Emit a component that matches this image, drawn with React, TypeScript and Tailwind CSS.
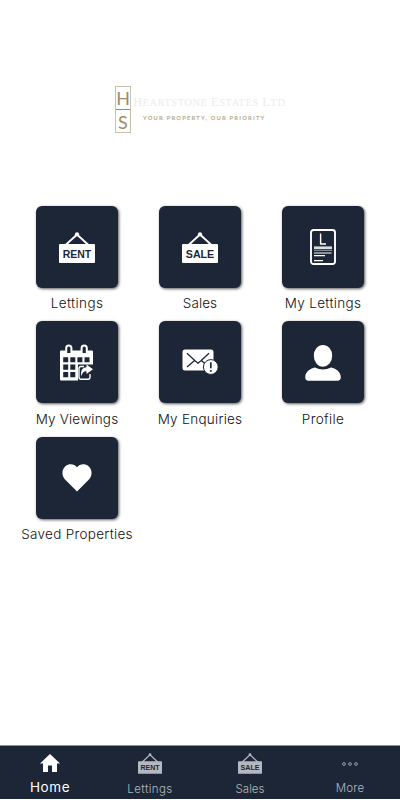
import React from 'react';

interface SignIconProps {
  text: string;
  className: string;
}

const SignIcon: React.FC<SignIconProps> = ({ text, className }) => (
  <svg viewBox="0 0 36 31" className={className}>
    <path d="M6 13.5 18 2.5 30 13.5" fill="none" stroke="currentColor" strokeWidth="1.9" />
    <circle cx="18" cy="2.3" r="2.1" fill="currentColor" />
    <rect x="0" y="12" width="36" height="19" rx="1" fill="currentColor" />
    <text
      x="18"
      y="25.6"
      textAnchor="middle"
      textLength="28.5"
      lengthAdjust="spacingAndGlyphs"
      fontSize="11.5"
      fontWeight="700"
      fill="#1c2637"
      fontFamily="'Liberation Sans', sans-serif"
    >
      {text}
    </text>
  </svg>
);

const DocumentIcon = () => (
  <svg viewBox="0 0 26 36" className="h-[36px] w-[26px]">
    <rect x="1" y="1" width="24" height="34" rx="2.5" fill="none" stroke="#fff" strokeWidth="1.9" />
    <path d="M10.6 4.5V15H16" fill="none" stroke="#fff" strokeWidth="1.4" />
    <path d="M4 18.7H22" stroke="#d9dce1" strokeWidth="2.6" />
    <path d="M4 21.3H22" stroke="#8e949e" strokeWidth="1.2" />
    <path d="M4 24H21.5M4 26.6H15M4 31.6H13" stroke="#fff" strokeWidth="1.2" />
  </svg>
);

const CalendarIcon = () => (
  <svg viewBox="0 0 36 37" className="h-[37px] w-[36px]">
    <path d="M2 6.5H33Q34 6.5 34 7.5V21H19V36.5H2Q1 36.5 1 35.5V7.5Q1 6.5 2 6.5Z" fill="#fff" />
    <path
      d="M7.2 9V4A2.6 2.6 0 0 1 12.4 4V9M22.6 9V4A2.6 2.6 0 0 1 27.8 4V9"
      fill="#1c2637"
      stroke="#fff"
      strokeWidth="2"
    />
    <path
      d="M4.2 13.3h5v4.9h-5zM11.3 13.3h5v4.9h-5zM18.4 13.3h5v4.9h-5zM25.5 13.3h5v4.9h-5zM4.2 20.5h5v5.2h-5zM11.3 20.5h5v5.2h-5zM4.2 28h5v5.2h-5zM11.3 28h5v5.2h-5z"
      fill="#1c2637"
    />
    <path d="M19 20.5H34V37H19Z" fill="#1c2637" />
    <path
      d="M25 22.5H22Q20 22.5 20 24.5V33Q20 35.2 22 35.2H29Q31 35.2 31 33V30"
      fill="none"
      stroke="#fff"
      strokeWidth="1.4"
    />
    <path d="M27.5 20.6 34 25.3 27.5 30V27.2C24.5 27.2 23.2 28.7 22.5 32.5C21.2 27 23.3 23.3 27.5 23.2Z" fill="#fff" />
  </svg>
);

const MailIcon = () => (
  <svg viewBox="0 0 37 26" className="h-[26px] w-[37px]">
    <rect x="0.5" y="0.5" width="31" height="21" rx="2.5" fill="#fff" />
    <path
      d="M5 4.2 13.3 12Q14.5 13 16 14.3Q17.5 13 18.7 12L27 4.2M12.6 11.5 5 18M19.4 11.5 24 15.5"
      fill="none"
      stroke="#1c2637"
      strokeWidth="1.3"
    />
    <circle cx="28.8" cy="18" r="7.4" fill="#fff" stroke="#1c2637" strokeWidth="1" />
    <path d="M28.8 13.3V19.3" stroke="#1c2637" strokeWidth="1.7" />
    <circle cx="28.8" cy="21.9" r="1" fill="#1c2637" />
  </svg>
);

const ProfileIcon = () => (
  <svg viewBox="0 0 36 37" className="h-[37px] w-[36px]">
    <ellipse cx="18" cy="11.8" rx="9.2" ry="10.9" fill="#fff" />
    <path
      d="M10 23.5Q18 27.5 26 23.5C31.5 24.8 35.5 28 35.8 33Q35.8 36.8 32.5 36.8H3.5Q.2 36.8 .2 33C.5 28 4.5 24.8 10 23.5Z"
      fill="#fff"
    />
  </svg>
);

const HeartIcon = () => (
  <svg viewBox="0 0 30 28" className="mt-[1px] h-[28px] w-[30px]">
    <path
      d="M15 27.5 2.8 15.2C-.7 11.3-.1 5.2 3.4 2.2C7-.8 12.3-.3 15 3.3C17.7-.3 23-.8 26.6 2.2C30.1 5.2 30.7 11.3 27.2 15.2Z"
      fill="#fff"
    />
  </svg>
);

const HomeIcon = () => (
  <svg viewBox="0 0 20 18" className="h-[18px] w-[20px]">
    <path d="M10 0 20 9.5H17V18H12V11.5H8V18H3V9.5H0Z" fill="#fff" />
  </svg>
);

const MoreIcon = () => (
  <svg viewBox="0 0 16 4" className="h-[4px] w-[16px]" fill="none" stroke="#b4b8bf" strokeWidth="0.8">
    <circle cx="2" cy="2" r="1.4" />
    <circle cx="8" cy="2" r="1.4" />
    <circle cx="14" cy="2" r="1.4" />
  </svg>
);

const tiles = [
  { label: 'Lettings', spacing: 'tracking-[0.4px]', icon: <SignIcon text="RENT" className="mt-[1px] h-[31px] w-[36px]" /> },
  { label: 'Sales', spacing: 'tracking-[0.1px]', icon: <SignIcon text="SALE" className="mt-[1px] h-[31px] w-[36px]" /> },
  { label: 'My Lettings', spacing: 'tracking-[0.35px]', icon: <DocumentIcon /> },
  { label: 'My Viewings', spacing: 'tracking-[0.2px]', icon: <CalendarIcon /> },
  { label: 'My Enquiries', spacing: 'tracking-[0.25px]', icon: <MailIcon /> },
  { label: 'Profile', spacing: 'tracking-[0.35px]', icon: <ProfileIcon /> },
  { label: 'Saved Properties', spacing: 'tracking-[0.3px]', icon: <HeartIcon /> },
];

const Logo = () => (
  <div className="flex h-[47px] w-[170px] gap-[2px]">
    <div className="flex h-[47px] w-[16px] shrink-0 flex-col border border-[#c9bfae] text-center font-['Lato',sans-serif] text-[18px] leading-[22px] text-[#a08a64]">
      <div className="h-[23px] border-b border-[#a08a64]">H</div>
      <div className="h-[22px] leading-[24px]">S</div>
    </div>
    <div className="flex flex-col whitespace-nowrap">
      <div className="mt-[8px] h-[16px] font-['Liberation_Serif',serif] text-[12.5px] leading-[16px] tracking-[0.5px] text-[#ececec]">
        H<span className="text-[10.5px]">EARTSTONE</span> E<span className="text-[10.5px]">STATES</span> L
        <span className="text-[10.5px]">TD</span>
      </div>
      <div className="ml-[10px] mt-[3px] font-['Lato',sans-serif] text-[5.8px] font-bold leading-[9px] tracking-[1.2px] text-[#b5a78c]">
        YOUR PROPERTY, OUR PRIORITY
      </div>
    </div>
  </div>
);

const App: React.FC = () => {
  return (
    <div className="flex h-[800px] w-[400px] flex-col overflow-hidden bg-white font-['Inter',sans-serif]">
      <header className="flex h-[206px] shrink-0 justify-center pt-[86px]">
        <Logo />
      </header>

      <main className="grid grid-cols-[123px_123px_123px] auto-rows-[115.4px] justify-center">
        {tiles.map((tile) => (
          <div key={tile.label} className="flex flex-col items-center">
            <div className="flex size-[82px] items-center justify-center rounded-[6px] bg-[#1c2637] text-white shadow-[1px_1px_3px_rgba(0,0,0,0.65)]">
              {tile.icon}
            </div>
            <div className={`mt-[5.3px] whitespace-nowrap text-[13.5px] font-light leading-[20px] text-[#111] ${tile.spacing}`}>
              {tile.label}
            </div>
          </div>
        ))}
      </main>

      <nav className="mt-auto mb-[1px] grid h-[54px] shrink-0 grid-cols-4 border-t border-[#8d929b] bg-[#1c2637] text-[#b4b8bf]">
        <div className="flex flex-col items-center pt-[8px] text-white">
          <HomeIcon />
          <span className="mt-[6px] text-[13.5px] leading-[18px] tracking-[0.6px]">Home</span>
        </div>
        <div className="flex flex-col items-center pt-[7px]">
          <SignIcon text="RENT" className="h-[21px] w-[24px]" />
          <span className="mt-[6px] text-[11.5px] font-light leading-[18px] tracking-[0.4px]">Lettings</span>
        </div>
        <div className="flex flex-col items-center pt-[7px]">
          <SignIcon text="SALE" className="h-[21px] w-[24px]" />
          <span className="mt-[6px] text-[11.5px] font-light leading-[18px]">Sales</span>
        </div>
        <div className="flex flex-col items-center pt-[16px]">
          <MoreIcon />
          <span className="mt-[13px] text-[11.5px] font-light leading-[18px] tracking-[0.2px]">More</span>
        </div>
      </nav>
    </div>
  );
};

export default App;
